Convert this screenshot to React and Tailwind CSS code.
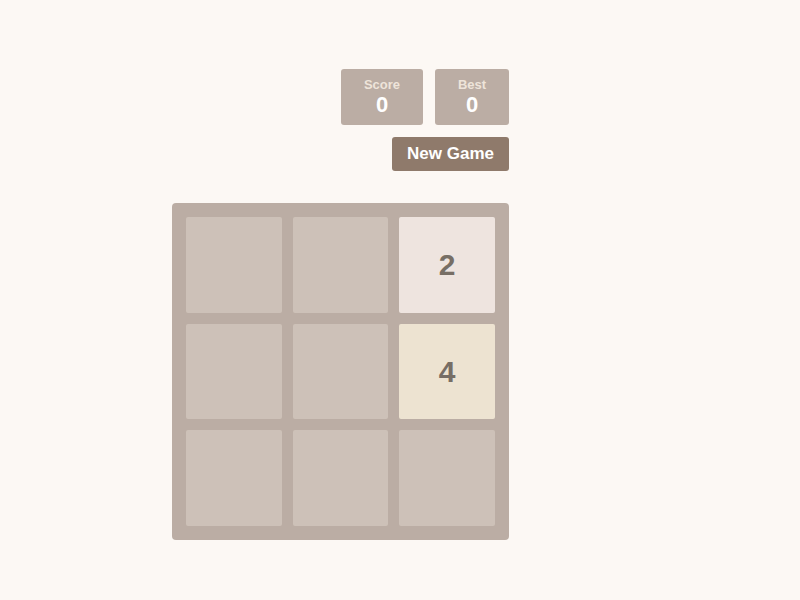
export default function App() {
  const tiles = [null, null, 2, null, null, 4, null, null, null];
  const tileClass = (v) => {
    if (v === 2) return "bg-[#eee4df] text-[#776e65]";
    if (v === 4) return "bg-[#ede3d1] text-[#776e65]";
    return "bg-[#cdc1b8]";
  };
  return (
    <div className="min-h-[600px] w-full bg-[#fcf8f4] font-['Liberation_Sans',Arial,sans-serif]">
      <div className="ml-[172px] w-[337px] pt-[69px]">
        <div className="flex justify-end gap-[12px]">
          <div className="flex h-[56px] w-[82px] flex-col items-center rounded-[3px] bg-[#bbada4] pt-[8px]">
            <span className="text-[13px] font-bold leading-[15px] text-[#eee4da]">Score</span>
            <span className="text-[22px] font-bold leading-[26px] text-white">0</span>
          </div>
          <div className="flex h-[56px] w-[74px] flex-col items-center rounded-[3px] bg-[#bbada4] pt-[8px]">
            <span className="text-[13px] font-bold leading-[15px] text-[#eee4da]">Best</span>
            <span className="text-[22px] font-bold leading-[26px] text-white">0</span>
          </div>
        </div>
        <div className="mt-[12px] flex justify-end">
          <button className="h-[34px] w-[117px] rounded-[3px] bg-[#8f7a6b] text-[17px] font-bold text-white">
            New Game
          </button>
        </div>
        <div className="mt-[32px] grid h-[337px] w-[337px] grid-cols-3 grid-rows-3 gap-[11px] rounded-[4px] bg-[#bbada4] p-[14px]">
          {tiles.map((v, i) => (
            <div
              key={i}
              className={`flex items-center justify-center rounded-[2px] text-[30px] font-bold ${tileClass(v)}`}
            >
              {v}
            </div>
          ))}
        </div>
      </div>
    </div>
  );
}
